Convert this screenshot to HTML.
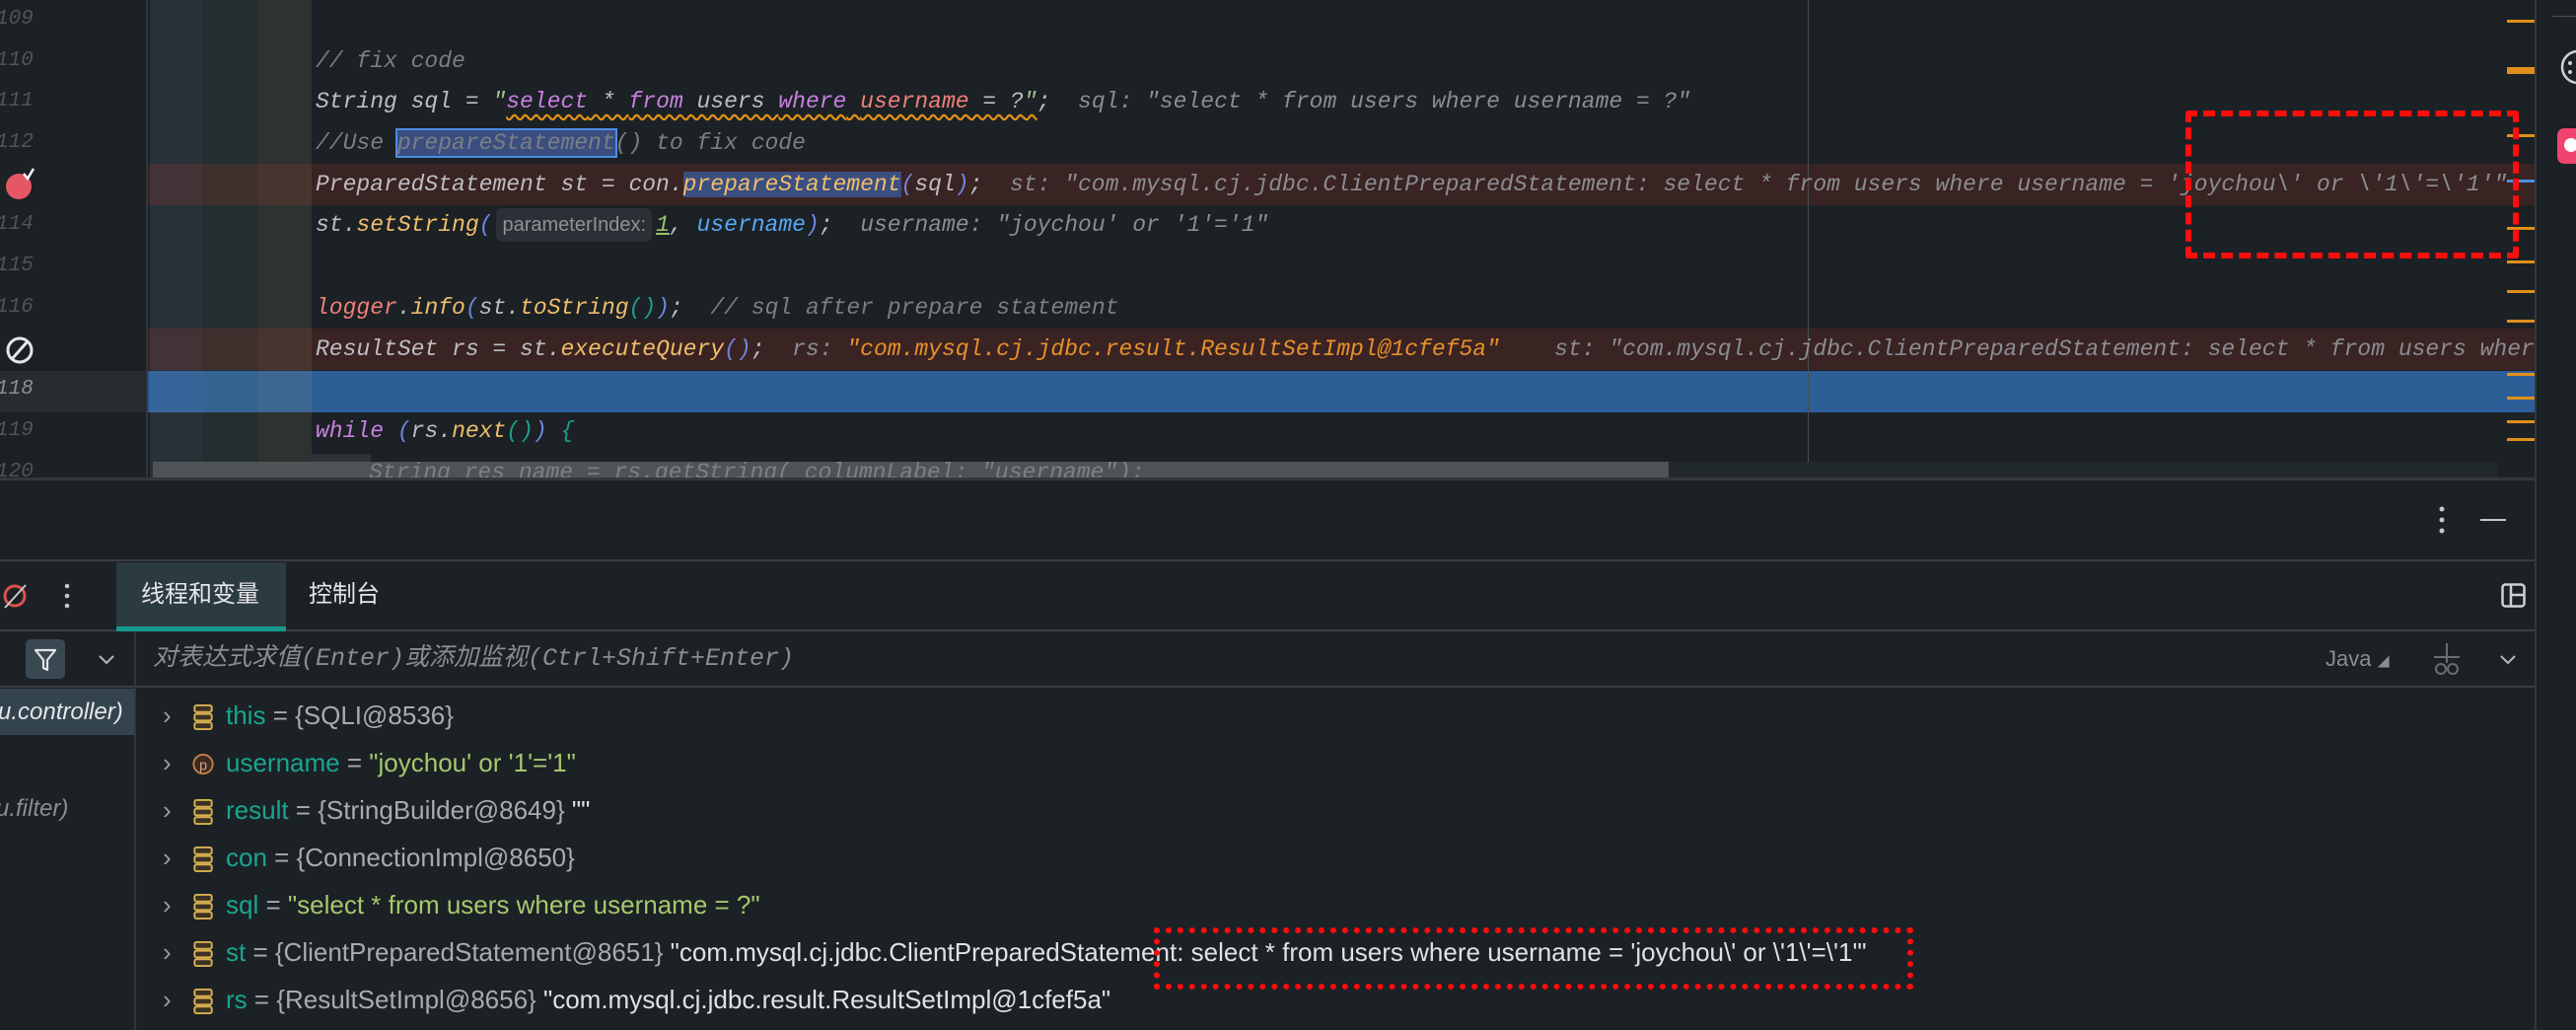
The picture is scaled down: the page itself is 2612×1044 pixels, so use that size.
<!DOCTYPE html>
<html><head><meta charset="utf-8"><style>
*{margin:0;padding:0;box-sizing:border-box}
body{width:2612px;height:1044px;background:#1b2125;position:relative;overflow:hidden;font-family:"Liberation Sans","Noto Sans CJK SC",sans-serif}
.a{position:absolute}
.code{position:absolute;left:320px;height:42px;line-height:42px;font-family:"Liberation Mono",monospace;font-style:italic;font-size:23px;color:#bcbec4;white-space:pre}
.ln{position:absolute;left:-4px;width:40px;height:42px;line-height:42px;font-family:"Liberation Mono",monospace;font-style:italic;font-size:21px;color:#4e545a}
.cm{color:#7a7e85}.y{color:#f0bd6a}.pu{color:#c880e0}.pk{color:#f07f7a}.bl{color:#6e86e0}.tl{color:#1f9e8a}.ub{color:#56a8f5}.gr{color:#8a8d92}.or{color:#e8902a}.g{color:#9bc26b}
.inl{display:inline-block;font-family:"Liberation Sans",sans-serif;font-style:normal;font-size:20px;color:#8f9297;background:#2a3035;border-radius:6px;padding:0 6px;line-height:34px;margin:0 4px}
.row{position:absolute;left:165px;height:48px;line-height:48px;font-size:26px;color:#a9abb0;white-space:pre}
.row .n{color:#1aa58f}.row .s{color:#a6c86e}.row .w{color:#dfe1e5}
.arr{display:inline-block;width:30px;color:#9a9ca0}
.ic{display:inline-block;width:22px;height:28px;vertical-align:middle;margin-right:12px}
.mk{position:absolute;left:2542px;width:28px;background:#e08f1a}
</style></head><body>
<div class="a" style="left:150px;top:166px;width:2421px;height:42px;background:#3a2323"></div>
<div class="a" style="left:150px;top:333px;width:2421px;height:42px;background:#3a2323"></div>
<div class="a" style="left:0;top:376px;width:150px;height:42px;background:#272c30"></div>
<div class="a" style="left:150px;top:376px;width:2421px;height:42px;background:#2d5e96"></div>
<div class="a" style="left:148px;top:0;width:2px;height:485px;background:#30363b"></div>
<div class="a" style="left:152px;top:0;width:53px;height:485px;background:rgba(130,150,175,0.14)"></div>
<div class="a" style="left:205px;top:0;width:56px;height:485px;background:rgba(100,150,125,0.12)"></div>
<div class="a" style="left:261px;top:0;width:55px;height:485px;background:rgba(160,155,120,0.14)"></div>
<div class="a" style="left:1833px;top:0;width:1px;height:485px;background:#4a4f55"></div>

<div class="ln" style="top:-1px">109</div>
<div class="ln" style="top:41px">110</div>
<div class="ln" style="top:82px">111</div>
<div class="ln" style="top:124px">112</div>
<div class="ln" style="top:207px">114</div>
<div class="ln" style="top:249px">115</div>
<div class="ln" style="top:291px">116</div>
<div class="ln" style="top:374px;color:#8a8f95">118</div>
<div class="ln" style="top:416px">119</div>
<div class="ln" style="top:458px">120</div>
<svg class="a" style="left:4px;top:168px" width="34" height="38"><circle cx="15" cy="21" r="13" fill="#e55765"/><path d="M20 8 l4 5 l6-10" stroke="#fff" stroke-width="2.5" fill="none"/></svg>
<svg class="a" style="left:4px;top:336px" width="34" height="38"><circle cx="16" cy="19" r="12" stroke="#e6e6e6" stroke-width="3" fill="none"/><path d="M8 28 L24 10" stroke="#e6e6e6" stroke-width="3"/></svg>

<div class="code cm" style="top:41px">// fix code</div>
<div class="code" style="top:82px">String sql = <span style="color:#a8c090">"</span><span style="text-decoration:underline wavy #e0901a;text-underline-offset:6px"><span class="pu">select</span> * <span class="pu">from</span> users <span class="pu">where</span> <span class="pk">username</span> = ?<span style="color:#a8c090">"</span></span>;  <span class="gr">sql: "select * from users where username = ?"</span></div>
<div class="code cm" style="top:124px">//Use <span style="background:#3b4e80;outline:2px solid #4a8ee6">prepareStatement</span>() to fix code</div>
<div class="code" style="top:166px;width:2250px;overflow:hidden">PreparedStatement st = con.<span class="y" style="background:#3b4e80">prepareStatement</span><span class="bl">(</span>sql<span class="bl">)</span>;  <span class="gr">st: "com.mysql.cj.jdbc.ClientPreparedStatement: select * from users where username = 'joychou\' or \'1\'=\'1'"</span></div>
<div class="code" style="top:207px">st.<span class="y">setString</span><span class="bl">(</span><span class="inl">parameterIndex:</span><span class="g" style="text-decoration:underline">1</span>, <span class="ub">username</span><span class="bl">)</span>;  <span class="gr">username: "joychou' or '1'='1"</span></div>
<div class="code" style="top:291px"><span class="pk">logger</span>.<span class="y">info</span><span class="bl">(</span>st.<span class="y">toString</span><span class="tl">()</span><span class="bl">)</span>;  <span class="cm">// sql after prepare statement</span></div>
<div class="code" style="top:333px;width:2250px;overflow:hidden">ResultSet rs = st.<span class="y">executeQuery</span><span class="bl">()</span>;  <span class="gr">rs: </span><span class="or">"com.mysql.cj.jdbc.result.ResultSetImpl@1cfef5a"</span>    <span class="gr">st: "com.mysql.cj.jdbc.ClientPreparedStatement: select * from users where username</span></div>
<div class="code" style="top:416px"><span class="pu">while</span> <span class="bl">(</span>rs.<span class="y">next</span><span class="tl">()</span><span class="bl">)</span> <span class="tl">{</span></div>
<div class="a" style="left:316px;top:460px;width:60px;height:25px;background:#2c3236"></div>
<div class="a" style="left:155px;top:468px;width:1537px;height:17px;background:#4e5358"></div>
<div class="a" style="left:1692px;top:468px;width:841px;height:17px;background:#22292d"></div>
<div class="code" style="top:458px;left:374px;height:27px;overflow:hidden;color:#7d8086">String res_name = rs.getString( columnLabel: "username");</div>

<div class="mk" style="top:20px;height:3px"></div>
<div class="mk" style="top:68px;height:7px"></div>
<div class="mk" style="top:136px;height:3px"></div>
<div class="mk" style="top:182px;height:3px;background:#4a90e2"></div>
<div class="mk" style="top:230px;height:3px"></div>
<div class="mk" style="top:264px;height:3px"></div>
<div class="mk" style="top:294px;height:3px"></div>
<div class="mk" style="top:324px;height:3px"></div>
<div class="mk" style="top:378px;height:3px"></div>
<div class="mk" style="top:402px;height:3px"></div>
<div class="mk" style="top:426px;height:3px"></div>
<div class="mk" style="top:444px;height:3px"></div>

<div class="a" style="left:2570px;top:0;width:2px;height:1044px;background:#33383d"></div>
<div class="a" style="left:2588px;top:16px;width:24px;height:1px;background:#4a4f55"></div>
<svg class="a" style="left:2592px;top:50px" width="20" height="36"><circle cx="22" cy="18" r="16" stroke="#cfd1d4" stroke-width="2.5" fill="none"/><circle cx="14" cy="14" r="2" fill="#cfd1d4"/><circle cx="14" cy="23" r="2" fill="#cfd1d4"/></svg>
<div class="a" style="left:2593px;top:130px;width:24px;height:36px;background:#f0436f;border-radius:7px"></div>
<div class="a" style="left:2600px;top:140px;width:14px;height:14px;border-radius:50%;background:#fff"></div>

<div class="a" style="left:0;top:484px;width:2570px;height:3px;background:#33383d"></div>
<div class="a" style="left:0;top:567px;width:2570px;height:2px;background:#393e43"></div>
<div class="a" style="left:0;top:638px;width:2570px;height:2px;background:#393e43"></div>
<div class="a" style="left:0;top:695px;width:2570px;height:2px;background:#393e43"></div>
<div class="a" style="left:136px;top:640px;width:2px;height:404px;background:#30363b"></div>

<svg class="a" style="left:2466px;top:512px" width="20" height="32"><circle cx="10" cy="4" r="2.5" fill="#c4c6ca"/><circle cx="10" cy="15" r="2.5" fill="#c4c6ca"/><circle cx="10" cy="26" r="2.5" fill="#c4c6ca"/></svg>
<div class="a" style="left:2515px;top:526px;width:26px;height:2px;background:#c4c6ca"></div>

<svg class="a" style="left:2px;top:590px" width="26" height="28"><circle cx="13" cy="14" r="10" stroke="#d9534f" stroke-width="3" fill="none"/><path d="M3 26 L24 3" stroke="#c8c8c8" stroke-width="2"/></svg>
<svg class="a" style="left:60px;top:590px" width="16" height="30"><circle cx="8" cy="4" r="2.3" fill="#c4c6ca"/><circle cx="8" cy="14" r="2.3" fill="#c4c6ca"/><circle cx="8" cy="24" r="2.3" fill="#c4c6ca"/></svg>
<div class="a" style="left:118px;top:570px;width:172px;height:70px;background:#2c3a42"></div>
<div class="a" style="left:118px;top:635px;width:172px;height:5px;background:#149a8a"></div>
<div class="a" style="left:143px;top:585px;font-size:24px;color:#e4e6e9;line-height:36px">线程和变量</div>
<div class="a" style="left:313px;top:585px;font-size:24px;color:#e4e6e9;line-height:36px">控制台</div>
<svg class="a" style="left:2536px;top:591px" width="26" height="26"><rect x="1.5" y="1.5" width="22" height="22" rx="3" stroke="#cfd1d4" stroke-width="2.5" fill="none"/><path d="M10 2 V24 M10 12 H24" stroke="#cfd1d4" stroke-width="2.5"/></svg>

<div class="a" style="left:26px;top:648px;width:40px;height:40px;background:#3a4852;border-radius:5px"></div>
<svg class="a" style="left:33px;top:655px" width="26" height="28"><path d="M3 4 H23 L15 14 V24 L11 22 V14 Z" stroke="#e2e4e7" stroke-width="2.2" fill="none" stroke-linejoin="round"/></svg>
<svg class="a" style="left:98px;top:662px" width="20" height="14"><path d="M3 3 L10 10 L17 3" stroke="#b6b8bc" stroke-width="2" fill="none"/></svg>
<div class="a" style="left:155px;top:650px;font-family:'Liberation Mono','Noto Sans CJK SC',monospace;font-style:italic;font-size:25px;color:#8a8d92;line-height:36px;white-space:pre">对表达式求值(Enter)或添加监视(Ctrl+Shift+Enter)</div>
<div class="a" style="left:2358px;top:652px;font-size:22px;color:#8a8d92;line-height:32px">Java <span style="font-size:12px">◢</span></div>
<svg class="a" style="left:2464px;top:650px" width="34" height="36"><path d="M17 2 V22 M4 16 H30" stroke="#6a6e73" stroke-width="2"/><circle cx="11" cy="28" r="5" stroke="#6a6e73" stroke-width="2" fill="none"/><circle cx="23" cy="28" r="5" stroke="#6a6e73" stroke-width="2" fill="none"/></svg>
<svg class="a" style="left:2533px;top:662px" width="20" height="14"><path d="M3 3 L10 10 L17 3" stroke="#b6b8bc" stroke-width="2" fill="none"/></svg>

<div class="a" style="left:0;top:698px;width:136px;height:47px;background:#34444e"></div>
<div class="a" style="left:-2px;top:702px;font-size:24px;font-style:italic;color:#e4e6e9;line-height:40px;white-space:pre">u.controller)</div>
<div class="a" style="left:-4px;top:800px;font-size:24px;font-style:italic;color:#8a8d92;line-height:40px;white-space:pre">u.filter)</div>

<svg width="0" height="0" style="position:absolute"><defs><g id="fld"><rect x="2" y="2" width="18" height="7" rx="2" stroke="#d9b050" stroke-width="2" fill="#3b3225"/><rect x="2" y="11" width="18" height="7" rx="2" stroke="#d9b050" stroke-width="2" fill="#3b3225"/><rect x="2" y="20" width="18" height="7" rx="2" stroke="#d9b050" stroke-width="2" fill="#3b3225"/></g></defs></svg>
<div class="row" style="top:701px"><span class="arr">›</span><svg class="ic" viewBox="0 0 22 29"><use href="#fld"/></svg><span class="n">this</span> = {SQLI@8536}</div>
<div class="row" style="top:749px"><span class="arr">›</span><svg class="ic" viewBox="0 0 22 29"><circle cx="11" cy="14" r="10" stroke="#c77a4a" stroke-width="2" fill="#3b2a22"/><text x="11" y="20" font-size="15" text-anchor="middle" fill="#d9a080" font-family="Liberation Sans">p</text></svg><span class="n">username</span> = <span class="s">"joychou' or '1'='1"</span></div>
<div class="row" style="top:797px"><span class="arr">›</span><svg class="ic" viewBox="0 0 22 29"><use href="#fld"/></svg><span class="n">result</span> = {StringBuilder@8649} <span class="w">""</span></div>
<div class="row" style="top:845px"><span class="arr">›</span><svg class="ic" viewBox="0 0 22 29"><use href="#fld"/></svg><span class="n">con</span> = {ConnectionImpl@8650}</div>
<div class="row" style="top:893px"><span class="arr">›</span><svg class="ic" viewBox="0 0 22 29"><use href="#fld"/></svg><span class="n">sql</span> = <span class="s">"select * from users where username = ?"</span></div>
<div class="row" style="top:941px"><span class="arr">›</span><svg class="ic" viewBox="0 0 22 29"><use href="#fld"/></svg><span class="n">st</span> = {ClientPreparedStatement@8651} <span class="w">"com.mysql.cj.jdbc.ClientPreparedStatement: select * from users where username = 'joychou\' or \'1\'=\'1'"</span></div>
<div class="row" style="top:989px"><span class="arr">›</span><svg class="ic" viewBox="0 0 22 29"><use href="#fld"/></svg><span class="n">rs</span> = {ResultSetImpl@8656} <span class="w">"com.mysql.cj.jdbc.result.ResultSetImpl@1cfef5a"</span></div>

<div class="a" style="left:2216px;top:112px;width:338px;height:150px;border:6px dashed #ff0d0d;border-radius:3px"></div>
<div class="a" style="left:1170px;top:940px;width:770px;height:63px;border:6px dotted #ff0d0d"></div>
</body></html>
